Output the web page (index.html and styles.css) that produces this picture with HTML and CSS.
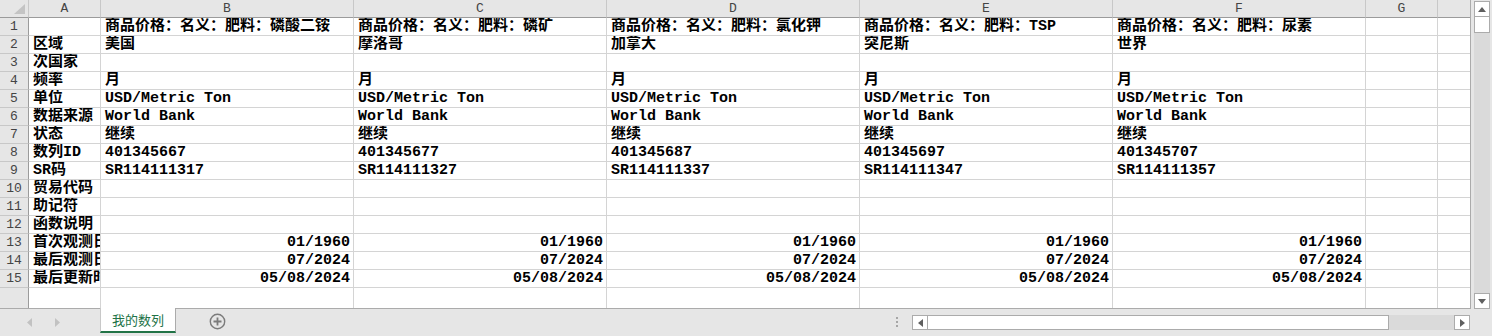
FILE: index.html
```html
<!doctype html>
<html>

<head>
	<meta charset="utf-8">
	<title>我的数列</title>
	<link rel="stylesheet" href="styles.css">
</head>

<body>
	<div id="book">
		<div class="pane">
			<div class="sheet">
				<div class="row head">
					<div class="corner"><svg width="11" height="10" viewBox="0 0 11 10"><polygon points="11,0 11,10 0,10" fill="#c4c4c4"/></svg></div>
					<div class="ch">A</div>
					<div class="ch">B</div>
					<div class="ch">C</div>
					<div class="ch">D</div>
					<div class="ch">E</div>
					<div class="ch">F</div>
					<div class="ch">G</div>
					<div class="ch last"></div>
				</div>
				<div class="row">
					<div class="rh">1</div>
					<div class="c"></div>
					<div class="c">商品价格：名义：肥料：磷酸二铵</div>
					<div class="c">商品价格：名义：肥料：磷矿</div>
					<div class="c">商品价格：名义：肥料：氯化钾</div>
					<div class="c">商品价格：名义：肥料：TSP</div>
					<div class="c">商品价格：名义：肥料：尿素</div>
					<div class="c"></div>
					<div class="c last"></div>
				</div>
				<div class="row">
					<div class="rh">2</div>
					<div class="c">区域</div>
					<div class="c">美国</div>
					<div class="c">摩洛哥</div>
					<div class="c">加拿大</div>
					<div class="c">突尼斯</div>
					<div class="c">世界</div>
					<div class="c"></div>
					<div class="c last"></div>
				</div>
				<div class="row">
					<div class="rh">3</div>
					<div class="c">次国家</div>
					<div class="c"></div>
					<div class="c"></div>
					<div class="c"></div>
					<div class="c"></div>
					<div class="c"></div>
					<div class="c"></div>
					<div class="c last"></div>
				</div>
				<div class="row">
					<div class="rh">4</div>
					<div class="c">频率</div>
					<div class="c">月</div>
					<div class="c">月</div>
					<div class="c">月</div>
					<div class="c">月</div>
					<div class="c">月</div>
					<div class="c"></div>
					<div class="c last"></div>
				</div>
				<div class="row">
					<div class="rh">5</div>
					<div class="c">单位</div>
					<div class="c">USD/Metric Ton</div>
					<div class="c">USD/Metric Ton</div>
					<div class="c">USD/Metric Ton</div>
					<div class="c">USD/Metric Ton</div>
					<div class="c">USD/Metric Ton</div>
					<div class="c"></div>
					<div class="c last"></div>
				</div>
				<div class="row">
					<div class="rh">6</div>
					<div class="c">数据来源</div>
					<div class="c">World Bank</div>
					<div class="c">World Bank</div>
					<div class="c">World Bank</div>
					<div class="c">World Bank</div>
					<div class="c">World Bank</div>
					<div class="c"></div>
					<div class="c last"></div>
				</div>
				<div class="row">
					<div class="rh">7</div>
					<div class="c">状态</div>
					<div class="c">继续</div>
					<div class="c">继续</div>
					<div class="c">继续</div>
					<div class="c">继续</div>
					<div class="c">继续</div>
					<div class="c"></div>
					<div class="c last"></div>
				</div>
				<div class="row">
					<div class="rh">8</div>
					<div class="c">数列ID</div>
					<div class="c">401345667</div>
					<div class="c">401345677</div>
					<div class="c">401345687</div>
					<div class="c">401345697</div>
					<div class="c">401345707</div>
					<div class="c"></div>
					<div class="c last"></div>
				</div>
				<div class="row">
					<div class="rh">9</div>
					<div class="c">SR码</div>
					<div class="c">SR114111317</div>
					<div class="c">SR114111327</div>
					<div class="c">SR114111337</div>
					<div class="c">SR114111347</div>
					<div class="c">SR114111357</div>
					<div class="c"></div>
					<div class="c last"></div>
				</div>
				<div class="row">
					<div class="rh">10</div>
					<div class="c">贸易代码</div>
					<div class="c"></div>
					<div class="c"></div>
					<div class="c"></div>
					<div class="c"></div>
					<div class="c"></div>
					<div class="c"></div>
					<div class="c last"></div>
				</div>
				<div class="row">
					<div class="rh">11</div>
					<div class="c">助记符</div>
					<div class="c"></div>
					<div class="c"></div>
					<div class="c"></div>
					<div class="c"></div>
					<div class="c"></div>
					<div class="c"></div>
					<div class="c last"></div>
				</div>
				<div class="row">
					<div class="rh">12</div>
					<div class="c">函数说明</div>
					<div class="c"></div>
					<div class="c"></div>
					<div class="c"></div>
					<div class="c"></div>
					<div class="c"></div>
					<div class="c"></div>
					<div class="c last"></div>
				</div>
				<div class="row">
					<div class="rh">13</div>
					<div class="c">首次观测日期</div>
					<div class="c num">01/1960</div>
					<div class="c num">01/1960</div>
					<div class="c num">01/1960</div>
					<div class="c num">01/1960</div>
					<div class="c num">01/1960</div>
					<div class="c"></div>
					<div class="c last"></div>
				</div>
				<div class="row">
					<div class="rh">14</div>
					<div class="c">最后观测日期</div>
					<div class="c num">07/2024</div>
					<div class="c num">07/2024</div>
					<div class="c num">07/2024</div>
					<div class="c num">07/2024</div>
					<div class="c num">07/2024</div>
					<div class="c"></div>
					<div class="c last"></div>
				</div>
				<div class="row">
					<div class="rh">15</div>
					<div class="c">最后更新时间</div>
					<div class="c num">05/08/2024</div>
					<div class="c num">05/08/2024</div>
					<div class="c num">05/08/2024</div>
					<div class="c num">05/08/2024</div>
					<div class="c num">05/08/2024</div>
					<div class="c"></div>
					<div class="c last"></div>
				</div>
				<div class="row tail">
					<div class="rh"></div>
					<div class="c"></div>
					<div class="c"></div>
					<div class="c"></div>
					<div class="c"></div>
					<div class="c"></div>
					<div class="c"></div>
					<div class="c"></div>
					<div class="c last"></div>
				</div>
			</div>

			<div class="tabs">
				<div class="nav">
					<svg width="5" height="9" viewBox="0 0 5 9"><polygon points="5,0 5,9 0,4.5" fill="#c2c2c2"/></svg>
					<svg width="5" height="9" viewBox="0 0 5 9"><polygon points="0,0 0,9 5,4.5" fill="#c2c2c2"/></svg>
				</div>
				<div class="tab">我的数列</div>
				<div class="add">
					<svg width="17" height="17" viewBox="0 0 17 17">
						<circle cx="8.5" cy="8.5" r="7.2" fill="none" stroke="#7b7b7b" stroke-width="1.4"/>
						<path d="M8.5 4.5v8M4.5 8.5h8" stroke="#7b7b7b" stroke-width="1.8"/>
					</svg>
				</div>
				<div class="spacer"></div>
				<div class="dots"><i></i><i></i><i></i></div>
				<div class="hbar">
					<div class="btn"><svg width="5" height="8" viewBox="0 0 5 8"><polygon points="5,0 5,8 0,4" fill="#5f5f5f"/></svg></div>
					<div class="thumb"></div>
					<div class="track"></div>
					<div class="btn"><svg width="5" height="8" viewBox="0 0 5 8"><polygon points="0,0 0,8 5,4" fill="#5f5f5f"/></svg></div>
				</div>
			</div>
		</div>

		<div class="vscroll">
			<div class="btn"><svg width="8" height="5" viewBox="0 0 8 5"><polygon points="0,5 8,5 4,0" fill="#5f5f5f"/></svg></div>
			<div class="thumb"></div>
			<div class="track"></div>
			<div class="btn"><svg width="8" height="5" viewBox="0 0 8 5"><polygon points="0,0 8,0 4,5" fill="#5f5f5f"/></svg></div>
		</div>
	</div>
</body>

</html>
```

FILE: styles.css
```css
* {
	margin: 0;
	padding: 0;
	box-sizing: border-box;
}

body {
	width: 1492px;
	height: 336px;
	overflow: hidden;
	background: #e6e6e6;
	font-family: "Liberation Mono", "Noto Sans CJK SC", monospace;
}

#book {
	display: flex;
	height: 336px;
}

.pane {
	width: 1471px;
	display: flex;
	flex-direction: column;
}

/* grid */
.sheet {
	height: 308px;
	display: grid;
	grid-template-columns: 29px 72px repeat(5, 253px) 72px 1fr;
	grid-template-rows: repeat(16, 18px) 1fr;
	background: #fff;
	border-right: 1px solid #ababab;
}

.row {
	display: contents;
}

.c {
	border-right: 1px solid #d4d4d4;
	border-bottom: 1px solid #d4d4d4;
	padding: 0 3px 0 4px;
	font-size: 15px;
	font-weight: bold;
	line-height: 17px;
	color: #000;
	white-space: nowrap;
	overflow: hidden;
}

.c.num {
	text-align: right;
}

.c.last,
.ch.last {
	border-right: none;
}

.tail .c,
.tail .rh {
	border-bottom: none;
}

.corner,
.ch {
	background: #e6e6e6;
	border-right: 1px solid #c8c8c8;
	border-bottom: 1px solid #9b9b9b;
}

.corner {
	display: flex;
	align-items: flex-end;
	justify-content: flex-end;
	padding: 0 3px 3px 0;
}

.ch,
.rh {
	font-size: 13px;
	line-height: 17px;
	color: #444;
	text-align: center;
}

.rh {
	background: #e6e6e6;
	border-right: 1px solid #9b9b9b;
	border-bottom: 1px solid #c8c8c8;
}

/* sheet tabs */
.tabs {
	height: 28px;
	display: flex;
	align-items: flex-start;
	border-top: 1px solid #ababab;
}

.nav {
	width: 100px;
	display: flex;
	gap: 23px;
	padding: 9px 0 0 27px;
}

.tab {
	width: 76px;
	height: 25px;
	margin-top: -1px;
	background: #fff;
	border-left: 1px solid #c8c8c8;
	border-right: 1px solid #ababab;
	border-bottom: 2px solid #217346;
	color: #217346;
	font-family: "Noto Sans CJK SC", sans-serif;
	font-size: 13px;
	line-height: 23px;
	text-align: center;
}

.add {
	margin-left: 33px;
	padding-top: 4px;
}

.spacer {
	flex: 1;
}

.dots {
	width: 2px;
	margin: 8px 14px 0 0;
	display: flex;
	flex-direction: column;
	gap: 2px;
}

.dots i {
	display: block;
	width: 2px;
	height: 2px;
	background: #a6a6a6;
}

.hbar {
	width: 558px;
	height: 15px;
	margin: 6px 1px 0 0;
	display: flex;
}

.hbar .btn,
.vscroll .btn {
	background: #fff;
	border: 1px solid #ababab;
	display: flex;
	align-items: center;
	justify-content: center;
}

.hbar .btn {
	width: 16px;
}

.hbar .thumb {
	width: 462px;
	margin-left: -1px;
	background: #fff;
	border: 1px solid #ababab;
}

.hbar .track,
.vscroll .track {
	flex: 1;
	background: #dadada;
}

/* vertical scroll */
.vscroll {
	width: 21px;
	display: flex;
	flex-direction: column;
	padding: 1px 2px 27px 3px;
}

.vscroll .btn {
	height: 16px;
}

.vscroll .thumb {
	height: 17px;
	margin-top: -1px;
	background: #fff;
	border: 1px solid #ababab;
}
```
